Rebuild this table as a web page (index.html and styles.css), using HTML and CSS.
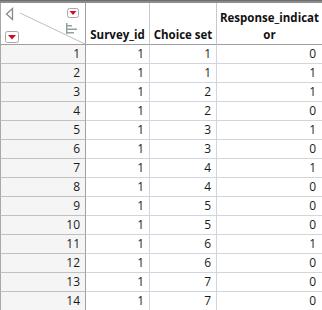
FILE: index.html
```html
<!DOCTYPE html>
<html>
<head>
<meta charset="utf-8">
<link rel="stylesheet" href="styles.css">
</head>
<body>
<div class="topbar"></div>
<div class="grid">
  <div class="corner">
    <svg class="corner-art" width="85" height="41" viewBox="0 0 85 41">
      <line x1="20" y1="10" x2="85" y2="41" stroke="#bdbdbd" stroke-width="1"/>
      <polygon points="12.5,5.5 6.5,11 12.5,16.5" fill="none" stroke="#8a8a8a" stroke-width="1.3"/>
      <rect x="67.5" y="5.5" width="11" height="9" rx="2" fill="#fff" stroke="#a8a8a8"/>
      <polygon points="69.5,8 76.5,8 73,12" fill="#d0101e"/>
      <rect x="5.5" y="28.5" width="13" height="11" rx="2" fill="#fff" stroke="#a8a8a8"/>
      <polygon points="8,32 16,32 12,36.5" fill="#d0101e"/>
      <rect x="66" y="20" width="1.5" height="11" fill="#8fa39c"/>
      <rect x="67" y="22" width="5" height="1.5" fill="#8fa39c"/>
      <rect x="67" y="25.5" width="10" height="1.5" fill="#8fa39c"/>
      <rect x="67" y="29" width="7" height="1.5" fill="#8fa39c"/>
    </svg>
  </div>
  <div class="head">Survey_id</div>
  <div class="head">Choice set</div>
  <div class="head last">Response_indicat<br>or</div>

  <div class="rn">1</div><div class="c">1</div><div class="c">1</div><div class="c last">0</div>
  <div class="rn">2</div><div class="c">1</div><div class="c">1</div><div class="c last">1</div>
  <div class="rn">3</div><div class="c">1</div><div class="c">2</div><div class="c last">1</div>
  <div class="rn">4</div><div class="c">1</div><div class="c">2</div><div class="c last">0</div>
  <div class="rn">5</div><div class="c">1</div><div class="c">3</div><div class="c last">1</div>
  <div class="rn">6</div><div class="c">1</div><div class="c">3</div><div class="c last">0</div>
  <div class="rn">7</div><div class="c">1</div><div class="c">4</div><div class="c last">1</div>
  <div class="rn">8</div><div class="c">1</div><div class="c">4</div><div class="c last">0</div>
  <div class="rn">9</div><div class="c">1</div><div class="c">5</div><div class="c last">0</div>
  <div class="rn">10</div><div class="c">1</div><div class="c">5</div><div class="c last">0</div>
  <div class="rn">11</div><div class="c">1</div><div class="c">6</div><div class="c last">1</div>
  <div class="rn">12</div><div class="c">1</div><div class="c">6</div><div class="c last">0</div>
  <div class="rn">13</div><div class="c">1</div><div class="c">7</div><div class="c last">0</div>
  <div class="rn">14</div><div class="c">1</div><div class="c">7</div><div class="c last">0</div>
</div>
</body>
</html>
```

FILE: styles.css
```css
html, body {
  margin: 0;
  padding: 0;
  background: #ffffff;
  overflow: hidden;
}
body {
  width: 322px;
  height: 310px;
  font-family: "Open Sans", "DejaVu Sans", sans-serif;
  color: #1a1a1a;
}
.topbar {
  height: 3px;
  background: #8c8c8c;
  border-top: 1px solid #6e6e6e;
  box-sizing: border-box;
}
.grid {
  display: grid;
  grid-template-columns: 86px 64px 67px 105px;
  grid-auto-rows: 19px;
  grid-template-rows: 42px;
}
.corner {
  position: relative;
  background: #ffffff;
  border-left: 1px solid #a8a8a8;
  border-right: 1px solid #a0a0a0;
  border-bottom: 1px solid #a0a0a0;
  box-sizing: border-box;
}
.corner-art {
  position: absolute;
  left: -1px;
  top: 0;
}
.head {
  display: flex;
  align-items: flex-end;
  justify-content: center;
  text-align: center;
  font-weight: 700;
  font-size: 11.5px;
  line-height: 17px;
  padding: 0 2px 1px;
  border-right: 1px solid #c8c8d0;
  border-bottom: 1px solid #a0a0a0;
  box-sizing: border-box;
  color: #111;
}
.head.last {
  border-right: none;
  padding: 0 0 1px;
  white-space: nowrap;
}
.rn {
  background: #f5f5f5;
  border-left: 1px solid #a8a8a8;
  border-right: 1px solid #a0a0a0;
  border-bottom: 1px solid #c0c0c0;
  box-sizing: border-box;
  text-align: right;
  padding-right: 5px;
  font-size: 12px;
  line-height: 18px;
}
.c {
  border-right: 1px solid #d4d4de;
  border-bottom: 1px solid #d4d4de;
  box-sizing: border-box;
  text-align: right;
  padding-right: 5px;
  font-size: 12px;
  line-height: 18px;
}
.c.last {
  border-right: none;
  padding-right: 6px;
}
```
